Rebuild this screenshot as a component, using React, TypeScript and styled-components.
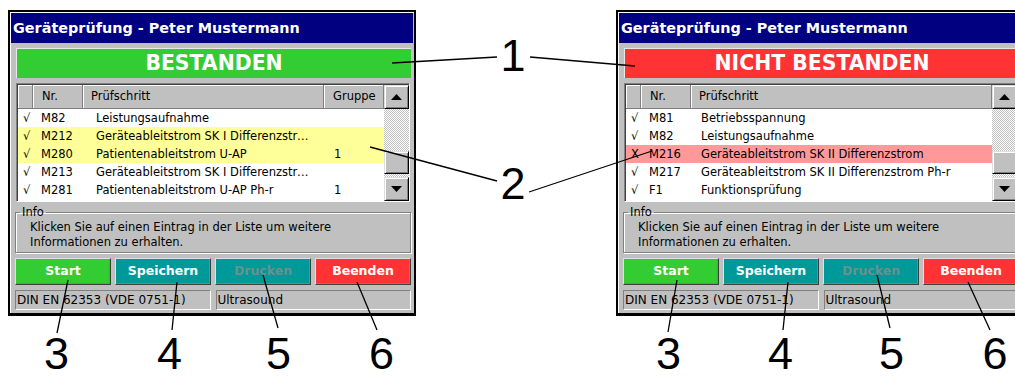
import React from 'react';
import styled, { createGlobalStyle } from 'styled-components';

type Tone = 'plain' | 'yellow' | 'red';

interface StepRow {
  mark: string;
  nr: string;
  text: string;
  group?: string;
  tone?: Tone;
}

interface DeviceWindowProps {
  passed: boolean;
  rows: StepRow[];
  showGroup?: boolean;
}

const GlobalStyle = createGlobalStyle`
  html, body {
    margin: 0;
    padding: 0;
    background: #fff;
    overflow: hidden;
  }
  body {
    font-family: "DejaVu Sans", Verdana, sans-serif;
  }
`;

const leftRows: StepRow[] = [
  { mark: '√', nr: 'M82', text: 'Leistungsaufnahme' },
  { mark: '√', nr: 'M212', text: 'Geräteableitstrom SK I Differenzstrom', tone: 'yellow' },
  { mark: '√', nr: 'M280', text: 'Patientenableitstrom U-AP', group: '1', tone: 'yellow' },
  { mark: '√', nr: 'M213', text: 'Geräteableitstrom SK I Differenzstrom' },
  { mark: '√', nr: 'M281', text: 'Patientenableitstrom U-AP Ph-r', group: '1' },
];

const rightRows: StepRow[] = [
  { mark: '√', nr: 'M81', text: 'Betriebsspannung' },
  { mark: '√', nr: 'M82', text: 'Leistungsaufnahme' },
  { mark: 'X', nr: 'M216', text: 'Geräteableitstrom SK II Differenzstrom', tone: 'red' },
  { mark: '√', nr: 'M217', text: 'Geräteableitstrom SK II Differenzstrom Ph-r' },
  { mark: '√', nr: 'F1', text: 'Funktionsprüfung' },
];

const Arrow: React.FC<{ down?: boolean }> = ({ down }) => (
  <svg width="11" height="6" viewBox="0 0 11 6">
    {down ? <polygon points="0,0 11,0 5.5,6" fill="#000" /> : <polygon points="0,6 11,6 5.5,0" fill="#000" />}
  </svg>
);

const DeviceWindow: React.FC<DeviceWindowProps> = ({ passed, rows, showGroup }) => {
  const cols = showGroup ? '15px 50px 241px 1fr' : '15px 50px 1fr';
  return (
    <Window>
      <TitleBar>Geräteprüfung - Peter Mustermann</TitleBar>
      <Body>
        <Banner $passed={passed}>{passed ? 'BESTANDEN' : 'NICHT BESTANDEN'}</Banner>
        <ListView>
          <ListMain>
            <HeaderRow $cols={cols}>
              <HeaderCell />
              <HeaderCell $pad={9}>Nr.</HeaderCell>
              <HeaderCell $pad={8}>Prüfschritt</HeaderCell>
              {showGroup && <HeaderCell $pad={9}>Gruppe</HeaderCell>}
            </HeaderRow>
            {rows.map((r) => (
              <Row key={r.nr} $cols={cols} $tone={r.tone || 'plain'}>
                <Cell $pad={5}>{r.mark}</Cell>
                <Cell $pad={8}>{r.nr}</Cell>
                <Cell $pad={showGroup ? 13 : 10}>{r.text}</Cell>
                {showGroup && <Cell $pad={10}>{r.group}</Cell>}
              </Row>
            ))}
          </ListMain>
          <ScrollBar>
            <ScrollButton>
              <Arrow />
            </ScrollButton>
            <ScrollTrack $size={42} />
            <ScrollThumb />
            <ScrollTrack />
            <ScrollButton>
              <Arrow down />
            </ScrollButton>
          </ScrollBar>
        </ListView>
        <InfoBox>
          <InfoLegend>Info</InfoLegend>
          <InfoText>
            Klicken Sie auf einen Eintrag in der Liste um weitere
            <br />
            Informationen zu erhalten.
          </InfoText>
        </InfoBox>
        <ButtonRow>
          <ActionButton $variant="green">Start</ActionButton>
          <ActionButton $variant="teal">Speichern</ActionButton>
          <ActionButton $variant="teal" $disabled>
            Drucken
          </ActionButton>
          <ActionButton $variant="red">Beenden</ActionButton>
        </ButtonRow>
        <StatusBar>
          <StatusPanel>DIN EN 62353 (VDE 0751-1)</StatusPanel>
          <StatusPanel>Ultrasound</StatusPanel>
        </StatusBar>
      </Body>
    </Window>
  );
};

const callLines: [number, number, number, number][] = [
  [497, 57, 392, 63],
  [530, 57, 635, 66],
  [497, 181, 370, 147],
  [529, 192, 652, 151],
  [68, 280, 57, 333],
  [177, 282, 172, 330],
  [263, 275, 278, 328],
  [357, 282, 377, 330],
  [677, 280, 668, 332],
  [788, 282, 783, 330],
  [877, 275, 890, 328],
  [968, 282, 990, 330],
];

const callNumbers: [string, number, number][] = [
  ['1', 513, 71],
  ['2', 513, 199],
  ['3', 56.5, 369],
  ['4', 169.5, 369],
  ['5', 278.5, 369],
  ['6', 381.5, 369],
  ['3', 668.5, 369],
  ['4', 780.5, 369],
  ['5', 891.5, 369],
  ['6', 995, 369],
];

const App: React.FC = () => (
  <Page>
    <GlobalStyle />
    <DeviceWindow passed rows={leftRows} showGroup />
    <DeviceWindow passed={false} rows={rightRows} />
    <Callouts width="1015" height="376" viewBox="0 0 1015 376">
      {callLines.map(([x1, y1, x2, y2], i) => (
        <line key={i} x1={x1} y1={y1} x2={x2} y2={y2} stroke="#000" strokeWidth="1.3" />
      ))}
      {callNumbers.map(([t, x, y], i) => (
        <text key={i} x={x} y={y} textAnchor="middle" fontFamily="'Liberation Sans', Arial, sans-serif" fontSize="45">
          {t}
        </text>
      ))}
    </Callouts>
  </Page>
);

const Page = styled.div`
  position: relative;
  width: 1015px;
  height: 376px;
  overflow: hidden;
  box-sizing: border-box;
  padding: 10px 0 0 8px;
  display: flex;
  align-items: flex-start;
  gap: 200px;
`;

const Callouts = styled.svg`
  position: absolute;
  left: 0;
  top: 0;
  pointer-events: none;
`;

const Window = styled.div`
  flex: none;
  width: 408px;
  height: 306px;
  box-sizing: border-box;
  border: 2px solid #000;
  border-bottom-width: 3px;
  background: #c0c0c0;
  box-shadow: inset 1px 1px 0 #fff;
  padding: 1px 1px 0 1px;
  display: flex;
  flex-direction: column;
`;

const TitleBar = styled.div`
  height: 30px;
  line-height: 30px;
  background: #000080;
  color: #fff;
  font-weight: bold;
  font-size: 14.4px;
  padding-left: 2px;
  white-space: nowrap;
`;

const Body = styled.div`
  flex: 1;
  display: flex;
  flex-direction: column;
  padding: 5px 2px 3px 4px;
`;

const Banner = styled.div<{ $passed: boolean }>`
  height: 30px;
  margin-left: 1px;
  box-sizing: border-box;
  border-top: 1px solid #e8e8e8;
  border-left: 1px solid #e8e8e8;
  background: ${(p) => (p.$passed ? '#33cc33' : '#ff3333')};
  color: #fff;
  font-weight: bold;
  font-size: 20.4px;
  line-height: 29px;
  text-align: center;
  white-space: nowrap;
`;

const ListView = styled.div`
  margin: 5px 1px 0 1px;
  height: 119px;
  box-sizing: border-box;
  border: 1px solid;
  border-color: #808080 #fff #fff #808080;
  box-shadow: inset 1px 1px 0 #404040;
  background: #fff;
  display: flex;
  padding: 1px 0 0 1px;
`;

const ListMain = styled.div`
  flex: 1;
  min-width: 0;
  display: flex;
  flex-direction: column;
  font-size: 11.5px;
  color: #000;
`;

const HeaderRow = styled.div<{ $cols: string }>`
  display: grid;
  grid-template-columns: ${(p) => p.$cols};
  height: 24px;
  flex: none;
`;

const HeaderCell = styled.div<{ $pad?: number }>`
  background: #c0c0c0;
  box-sizing: border-box;
  border-right: 1px solid #808080;
  border-bottom: 1px solid #808080;
  box-shadow: inset 1px 1px 0 #fff;
  padding-left: ${(p) => p.$pad || 0}px;
  line-height: 23px;
  white-space: nowrap;
  overflow: hidden;
`;

const toneColor: Record<Tone, string> = {
  plain: '#fff',
  yellow: '#ffff99',
  red: '#ff9999',
};

const Row = styled.div<{ $cols: string; $tone: Tone }>`
  display: grid;
  grid-template-columns: ${(p) => p.$cols};
  height: 18px;
  flex: none;
  background: ${(p) => toneColor[p.$tone]};
`;

const Cell = styled.div<{ $pad?: number }>`
  padding-left: ${(p) => p.$pad || 0}px;
  padding-right: 10px;
  line-height: 18px;
  white-space: nowrap;
  overflow: hidden;
  text-overflow: ellipsis;
`;

const ScrollBar = styled.div`
  flex: none;
  width: 25px;
  display: flex;
  flex-direction: column;
`;

const ScrollButton = styled.div`
  flex: none;
  height: 24px;
  box-sizing: border-box;
  background: #c0c0c0;
  border: 1px solid;
  border-color: #dfdfdf #000 #000 #dfdfdf;
  box-shadow: inset 1px 1px 0 #fff, inset -1px -1px 0 #808080;
  display: flex;
  align-items: center;
  justify-content: center;
`;

const ScrollTrack = styled.div<{ $size?: number }>`
  ${(p) => (p.$size ? `flex: none; height: ${p.$size}px;` : 'flex: 1;')}
  background: repeating-conic-gradient(#c0c0c0 0 25%, #fff 0 50%) 0 0 / 2px 2px;
`;

const ScrollThumb = styled(ScrollButton)`
  height: 23px;
`;

const InfoBox = styled.fieldset`
  margin: 4px 0 0 0;
  height: 47px;
  box-sizing: border-box;
  border: 1px solid #808080;
  box-shadow: 1px 1px 0 #fff, inset 1px 1px 0 #fff;
  padding: 0 0 0 14px;
  min-width: 0;
`;

const InfoLegend = styled.legend`
  font-size: 11.5px;
  line-height: 13px;
  padding: 0 2px;
  margin-left: -10px;
  color: #000;
`;

const InfoText = styled.div`
  font-size: 11.5px;
  line-height: 15px;
  color: #000;
  margin-top: 1px;
  white-space: nowrap;
`;

const buttonColor = {
  green: '#33cc33',
  teal: '#009999',
  red: '#ff3333',
};

const ActionButton = styled.div<{ $variant: keyof typeof buttonColor; $disabled?: boolean }>`
  box-sizing: border-box;
  height: 27px;
  background: ${(p) => buttonColor[p.$variant]};
  border: 1px solid;
  border-color: #e0e0e0 #404040 #404040 #e0e0e0;
  box-shadow: inset -1px -1px 0 #808080;
  color: ${(p) => (p.$disabled ? '#6f8f8f' : '#fff')};
  font-weight: bold;
  font-size: 12.5px;
  line-height: 24px;
  text-align: center;
  white-space: nowrap;
`;

const ButtonRow = styled.div`
  margin-top: 5px;
  display: grid;
  grid-template-columns: repeat(4, 1fr);
  gap: 4px;
`;

const StatusBar = styled.div`
  margin-top: 5px;
  display: grid;
  grid-template-columns: 1fr 1fr;
  gap: 5px;
  height: 20px;
`;

const StatusPanel = styled.div`
  box-sizing: border-box;
  border: 1px solid;
  border-color: #808080 #fff #fff #808080;
  padding-left: 1px;
  font-size: 12px;
  line-height: 18px;
  color: #000;
  white-space: nowrap;
  overflow: hidden;
`;

export default App;
